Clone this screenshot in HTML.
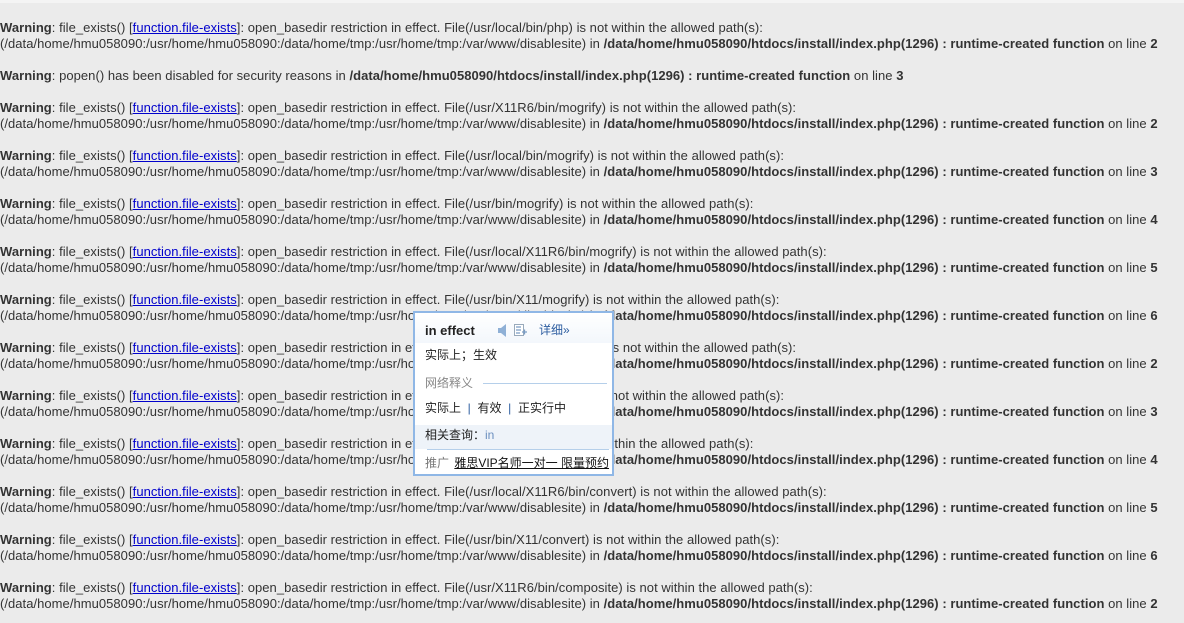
<!DOCTYPE html>
<html><head><meta charset="utf-8"><style>
html,body{margin:0;padding:0}
body{width:1184px;height:623px;overflow:hidden;background:#ebebeb;font-family:"Liberation Sans",Arial,sans-serif;font-size:13px;line-height:16px;color:#333;position:relative}
.top{height:3px;background:#f4f4f4}
.c{padding-top:17px;letter-spacing:0.04px}
p{margin:0 0 16px 0;white-space:nowrap}
a{color:#00c;text-decoration:underline}
b{color:#333}
.pop{position:absolute;left:413px;top:311px;width:197px;height:161px;border:2px solid #8fb7e6;background:#fff;font-family:"Liberation Sans","Noto Sans CJK SC",sans-serif;font-size:12px;color:#222}
.pop .r{position:absolute;left:10px;white-space:nowrap}
</style></head><body>
<div class="top"></div>
<div class="c">
<p><b>Warning</b>: file_exists() [<a>function.file-exists</a>]: open_basedir restriction in effect. File(/usr/local/bin/php) is not within the allowed path(s):<br>(/data/home/hmu058090:/usr/home/hmu058090:/data/home/tmp:/usr/home/tmp:/var/www/disablesite) in <b>/data/home/hmu058090/htdocs/install/index.php(1296) : runtime-created function</b> on line <b>2</b></p>
<p><b>Warning</b>: popen() has been disabled for security reasons in <b>/data/home/hmu058090/htdocs/install/index.php(1296) : runtime-created function</b> on line <b>3</b></p>
<p><b>Warning</b>: file_exists() [<a>function.file-exists</a>]: open_basedir restriction in effect. File(/usr/X11R6/bin/mogrify) is not within the allowed path(s):<br>(/data/home/hmu058090:/usr/home/hmu058090:/data/home/tmp:/usr/home/tmp:/var/www/disablesite) in <b>/data/home/hmu058090/htdocs/install/index.php(1296) : runtime-created function</b> on line <b>2</b></p>
<p><b>Warning</b>: file_exists() [<a>function.file-exists</a>]: open_basedir restriction in effect. File(/usr/local/bin/mogrify) is not within the allowed path(s):<br>(/data/home/hmu058090:/usr/home/hmu058090:/data/home/tmp:/usr/home/tmp:/var/www/disablesite) in <b>/data/home/hmu058090/htdocs/install/index.php(1296) : runtime-created function</b> on line <b>3</b></p>
<p><b>Warning</b>: file_exists() [<a>function.file-exists</a>]: open_basedir restriction in effect. File(/usr/bin/mogrify) is not within the allowed path(s):<br>(/data/home/hmu058090:/usr/home/hmu058090:/data/home/tmp:/usr/home/tmp:/var/www/disablesite) in <b>/data/home/hmu058090/htdocs/install/index.php(1296) : runtime-created function</b> on line <b>4</b></p>
<p><b>Warning</b>: file_exists() [<a>function.file-exists</a>]: open_basedir restriction in effect. File(/usr/local/X11R6/bin/mogrify) is not within the allowed path(s):<br>(/data/home/hmu058090:/usr/home/hmu058090:/data/home/tmp:/usr/home/tmp:/var/www/disablesite) in <b>/data/home/hmu058090/htdocs/install/index.php(1296) : runtime-created function</b> on line <b>5</b></p>
<p><b>Warning</b>: file_exists() [<a>function.file-exists</a>]: open_basedir restriction in effect. File(/usr/bin/X11/mogrify) is not within the allowed path(s):<br>(/data/home/hmu058090:/usr/home/hmu058090:/data/home/tmp:/usr/home/tmp:/var/www/disablesite) in <b>/data/home/hmu058090/htdocs/install/index.php(1296) : runtime-created function</b> on line <b>6</b></p>
<p><b>Warning</b>: file_exists() [<a>function.file-exists</a>]: open_basedir restriction in effect. File(/usr/X11R6/bin/convert) is not within the allowed path(s):<br>(/data/home/hmu058090:/usr/home/hmu058090:/data/home/tmp:/usr/home/tmp:/var/www/disablesite) in <b>/data/home/hmu058090/htdocs/install/index.php(1296) : runtime-created function</b> on line <b>2</b></p>
<p><b>Warning</b>: file_exists() [<a>function.file-exists</a>]: open_basedir restriction in effect. File(/usr/local/bin/convert) is not within the allowed path(s):<br>(/data/home/hmu058090:/usr/home/hmu058090:/data/home/tmp:/usr/home/tmp:/var/www/disablesite) in <b>/data/home/hmu058090/htdocs/install/index.php(1296) : runtime-created function</b> on line <b>3</b></p>
<p><b>Warning</b>: file_exists() [<a>function.file-exists</a>]: open_basedir restriction in effect. File(/usr/bin/convert) is not within the allowed path(s):<br>(/data/home/hmu058090:/usr/home/hmu058090:/data/home/tmp:/usr/home/tmp:/var/www/disablesite) in <b>/data/home/hmu058090/htdocs/install/index.php(1296) : runtime-created function</b> on line <b>4</b></p>
<p><b>Warning</b>: file_exists() [<a>function.file-exists</a>]: open_basedir restriction in effect. File(/usr/local/X11R6/bin/convert) is not within the allowed path(s):<br>(/data/home/hmu058090:/usr/home/hmu058090:/data/home/tmp:/usr/home/tmp:/var/www/disablesite) in <b>/data/home/hmu058090/htdocs/install/index.php(1296) : runtime-created function</b> on line <b>5</b></p>
<p><b>Warning</b>: file_exists() [<a>function.file-exists</a>]: open_basedir restriction in effect. File(/usr/bin/X11/convert) is not within the allowed path(s):<br>(/data/home/hmu058090:/usr/home/hmu058090:/data/home/tmp:/usr/home/tmp:/var/www/disablesite) in <b>/data/home/hmu058090/htdocs/install/index.php(1296) : runtime-created function</b> on line <b>6</b></p>
<p><b>Warning</b>: file_exists() [<a>function.file-exists</a>]: open_basedir restriction in effect. File(/usr/X11R6/bin/composite) is not within the allowed path(s):<br>(/data/home/hmu058090:/usr/home/hmu058090:/data/home/tmp:/usr/home/tmp:/var/www/disablesite) in <b>/data/home/hmu058090/htdocs/install/index.php(1296) : runtime-created function</b> on line <b>2</b></p>
</div>
<div class="pop">
<div style="position:absolute;left:0;top:0;width:197px;height:30px;background:linear-gradient(#fff,#f3f7fc)"></div>
<div class="r" style="top:10px;font-weight:bold;font-size:13px">in effect</div>
<svg style="position:absolute;left:82px;top:11px" width="12" height="13" viewBox="0 0 12 13"><path d="M1 4h3l5-4v13l-5-4H1z" fill="#8fb0d6"/></svg>
<svg style="position:absolute;left:99px;top:11px" width="14" height="13" viewBox="0 0 14 13"><rect x="0.5" y="0.5" width="9" height="11" fill="#fff" stroke="#9ab"/><path d="M2 3h5M2 6h5M2 9h4M8 8h5M10.5 5.5v5" stroke="#7a9cc4" stroke-width="1.3"/></svg>
<div class="r" style="left:124px;top:9px;color:#2d5da0">详细»</div>
<div class="r" style="top:34px">实际上；生效</div>
<div class="r" style="top:62px;color:#888">网络释义</div>
<div style="position:absolute;left:68px;top:70px;width:124px;height:1px;background:#b5cfea"></div>
<div class="r" style="top:87px">实际上 <span style="color:#2d5da0">&nbsp;|&nbsp;</span> 有效 <span style="color:#2d5da0">&nbsp;|&nbsp;</span> 正实行中</div>
<div style="position:absolute;left:0;top:112px;width:197px;height:24px;background:#eef3f9"></div>
<div class="r" style="top:114px">相关查询：<span style="color:#6b8fbf">in</span></div>
<div style="position:absolute;left:12px;top:136px;width:182px;height:1px;background:#b5cfea"></div>
<div class="r" style="top:142px;color:#777">推广 <span style="color:#111;text-decoration:underline;margin-left:2px">雅思VIP名师一对一 限量预约</span></div>
</div>
</body></html>
